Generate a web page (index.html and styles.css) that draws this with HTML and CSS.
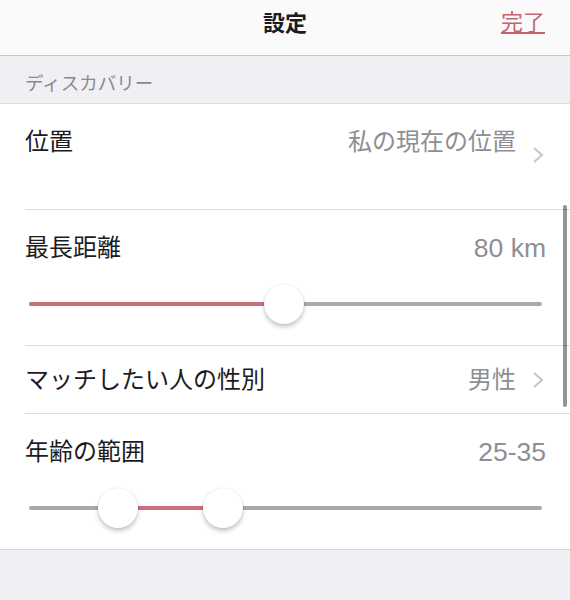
FILE: index.html
```html
<!DOCTYPE html>
<html lang="ja">
<head>
  <meta charset="UTF-8">
  <title>設定</title>
  <link rel="stylesheet" href="styles.css">
</head>
<body>

  <div class="navbar">
    <span class="nav-title">設定</span>
    <a class="nav-done">完了</a>
  </div>

  <div class="section-head">ディスカバリー</div>

  <div class="group">
    <div class="row row-tall">
      <span class="label">位置</span>
      <span class="value">私の現在の位置</span>
      <svg class="chev chev-low" width="12" height="18" viewBox="0 0 12 18"><polyline points="2,2 10,9 2,16"/></svg>
    </div>

    <div class="row row-slider">
      <div class="line">
        <span class="label">最長距離</span>
        <span class="value num">80 km</span>
      </div>
      <div class="slider">
        <div class="track"></div>
        <div class="fill" style="left:0;width:49.7%"></div>
        <div class="thumb" style="left:49.7%"></div>
      </div>
    </div>

    <div class="row row-short">
      <span class="label">マッチしたい人の性別</span>
      <span class="value">男性</span>
      <svg class="chev" width="12" height="18" viewBox="0 0 12 18"><polyline points="2,2 10,9 2,16"/></svg>
    </div>

    <div class="row row-slider last">
      <div class="line">
        <span class="label">年齢の範囲</span>
        <span class="value num">25-35</span>
      </div>
      <div class="slider">
        <div class="track"></div>
        <div class="fill" style="left:17.3%;width:20.5%"></div>
        <div class="thumb" style="left:17.3%"></div>
        <div class="thumb" style="left:37.8%"></div>
      </div>
    </div>
  </div>

  <div class="scrollbar"></div>

</body>
</html>
```

FILE: styles.css
```css
body {
  margin: 0; background: #efeff4; color: #1c1c1e;
  font-family: 'Liberation Sans', 'Noto Sans CJK JP', sans-serif;
  width: 570px; height: 600px; overflow: hidden; position: relative;
}

/* Top bar */
.navbar {
  height: 55px; background: #fbfafb;
  border-bottom: 1px solid #c9c9cc;
  display: flex; align-items: center; justify-content: center;
  position: relative;
}
.nav-title {
  font-size: 22px; font-weight: bold; line-height: 44px;
  margin-bottom: 8px;
}
.nav-done {
  position: absolute; right: 25px; top: 1px;
  font-size: 22px; line-height: 44px; color: #c9626f;
  text-decoration: underline; text-decoration-thickness: 2px;
  text-underline-offset: 2px;
}

/* Section header */
.section-head {
  height: 48px; padding: 4px 0 0 25px; box-sizing: border-box;
  display: flex; align-items: center;
  font-size: 18.5px; color: #8a8a8e;
  border-bottom: 1px solid #dedee2;
}

/* Rows */
.group { background: #fff; border-bottom: 1px solid #d4d4d8; }
.row {
  margin-left: 25px; padding-right: 24px;
  border-bottom: 1px solid #dcdcdf;
  display: flex; align-items: center;
  font-size: 24px; line-height: 32px;
}
.row.last { border-bottom: none; }
.row-tall { padding-top: 22px; padding-bottom: 45px; align-items: flex-start; }
.row-short { padding-top: 18px; padding-bottom: 17px; }
.row-slider {
  flex-direction: column; align-items: stretch;
  padding-top: 22px; padding-bottom: 21px;
}
.line { display: flex; align-items: center; height: 32px; }
.label { flex: 1; }
.value { color: #8e8e93; }
.value.num { font-size: 26.5px; }

.chev { margin-left: 16px; margin-right: 2px; fill: none; stroke: #c4c4c8; stroke-width: 2; }
.chev-low { margin-top: 20px; }

/* Sliders */
.slider { position: relative; height: 40px; margin: 20px 4px 0 4px; }
.track, .fill {
  position: absolute; top: 18px; height: 4px; border-radius: 2px;
}
.track { left: 0; right: 0; background: #a9a9ab; }
.fill { background: #c9707a; }
.thumb {
  position: absolute; top: 0; width: 40px; height: 40px;
  margin-left: -20px; border-radius: 50%; background: #fff;
  box-shadow: 0 0 0 0.5px rgba(0,0,0,0.08), 0 3px 4px rgba(0,0,0,0.22);
}

.scrollbar {
  position: absolute; right: 3px; top: 205px;
  width: 4px; height: 202px; border-radius: 2px;
  background: rgba(0,0,0,0.42);
}
```
